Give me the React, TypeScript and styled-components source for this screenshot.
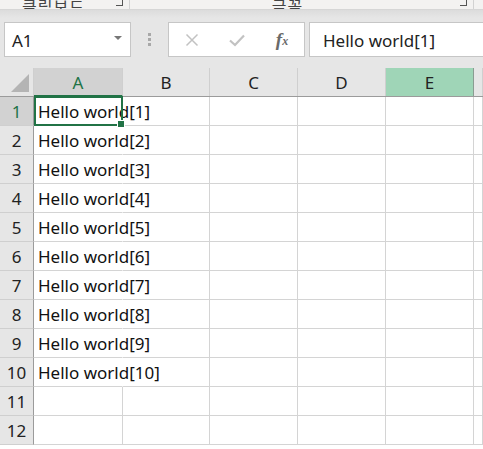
import React from 'react';
import styled, { createGlobalStyle } from 'styled-components';

const GlobalStyle = createGlobalStyle`
  html, body {
    margin: 0;
    padding: 0;
    background: #ffffff;
  }
  body {
    font-family: "Noto Sans", "Noto Sans CJK KR", sans-serif;
    overflow: hidden;
  }
`;

const columns = ['A', 'B', 'C', 'D', 'E'];
const colWidths = [89, 87, 88, 88, 88];
const rows = Array.from({ length: 12 }, (_, i) => i + 1);

export default function App() {
  return (
    <Page>
      <GlobalStyle />
      <Ribbon>
        <RibbonGroup $width={130}>
          <RibbonLabel $shift={-22}>클립보드</RibbonLabel>
          <Launcher />
        </RibbonGroup>
        <RibbonGroup $width={344}>
          <RibbonLabel $shift={-28}>글꼴</RibbonLabel>
          <Launcher />
        </RibbonGroup>
      </Ribbon>
      <FormulaArea>
        <NameBox>
          <span>A1</span>
          <Caret />
        </NameBox>
        <Grip>
          <i />
          <i />
          <i />
        </Grip>
        <FxButtons>
          <FxButton>
            <svg width="14" height="14" viewBox="0 0 14 14">
              <path d="M1.5 1.5 L12.5 12.5 M12.5 1.5 L1.5 12.5" stroke="#c2c2c2" strokeWidth="1.5" fill="none" />
            </svg>
          </FxButton>
          <FxButton>
            <svg width="18" height="16" viewBox="0 0 18 16">
              <path d="M2 8.5 L7 13 L16 3.5" stroke="#c2c2c2" strokeWidth="2.2" fill="none" />
            </svg>
          </FxButton>
          <FxButton $fx>
            f<sub>x</sub>
          </FxButton>
        </FxButtons>
        <FormulaInput>Hello world[1]</FormulaInput>
      </FormulaArea>
      <Sheet>
        <HeaderRow>
          <Corner>
            <svg width="20" height="20" viewBox="0 0 20 20">
              <path d="M19 1 L19 19 L1 19 Z" fill="#b4b4b4" />
            </svg>
          </Corner>
          {columns.map((c, i) => (
            <ColHeader key={c} $w={colWidths[i]} $active={c === 'A'} $green={c === 'E'}>
              {c}
            </ColHeader>
          ))}
          <ColHeader $w={0} $grow />
        </HeaderRow>
        {rows.map((r) => (
          <Row key={r}>
            <RowHeader $active={r === 1}>{r}</RowHeader>
            {columns.map((c, i) => (
              <Cell key={c} $w={colWidths[i]} $noRight={c === 'A' && r <= 10}>
                {c === 'A' && r <= 10 && <CellText>Hello world[{r}]</CellText>}
                {c === 'A' && r === 1 && (
                  <Selection>
                    <Handle />
                  </Selection>
                )}
              </Cell>
            ))}
            <Cell $w={0} $grow />
          </Row>
        ))}
      </Sheet>
    </Page>
  );
}

const Page = styled.div`
  width: 483px;
  height: 449px;
  overflow: hidden;
  display: flex;
  flex-direction: column;
`;

const Ribbon = styled.div`
  height: 9px;
  display: flex;
  background: #f3f2f1;
  border-bottom: 1px solid #d6d6d6;
  overflow: hidden;
`;

const RibbonGroup = styled.div<{ $width: number }>`
  width: ${(p) => p.$width}px;
  flex: none;
  display: flex;
  align-items: flex-end;
  justify-content: center;
  position: relative;
  border-right: 1px solid #d2d2d2;
  box-sizing: border-box;
  height: 9px;
`;

const RibbonLabel = styled.span<{ $shift: number }>`
  font-size: 16px;
  line-height: 16px;
  color: #444;
  margin-bottom: -6px;
  margin-left: ${(p) => p.$shift}px;
  letter-spacing: 1px;
`;

const Launcher = styled.span`
  position: absolute;
  right: 6px;
  bottom: 3px;
  width: 6px;
  height: 5px;
  border-right: 1px solid #555;
  border-bottom: 1px solid #555;
`;

const FormulaArea = styled.div`
  height: 58px;
  box-sizing: border-box;
  padding: 12px 0 11px 4px;
  display: flex;
  align-items: stretch;
  background: linear-gradient(#dcdcdc, #e6e6e6 8px, #e6e6e6);
`;

const NameBox = styled.div`
  width: 127px;
  box-sizing: border-box;
  background: #fff;
  border: 1px solid #c6c6c6;
  display: flex;
  align-items: center;
  justify-content: space-between;
  padding: 2px 8px 0 7px;
  font-size: 17px;
  color: #222;
`;

const Caret = styled.span`
  width: 0;
  height: 0;
  border-left: 4px solid transparent;
  border-right: 4px solid transparent;
  border-top: 4px solid #777;
  margin-top: -6px;
`;

const Grip = styled.div`
  width: 37px;
  display: flex;
  flex-direction: column;
  align-items: center;
  justify-content: center;
  gap: 2px;
  i {
    width: 3px;
    height: 3px;
    background: #a8a8a8;
  }
`;

const FxButtons = styled.div`
  width: 137px;
  box-sizing: border-box;
  background: #fff;
  border: 1px solid #c6c6c6;
  display: flex;
  align-items: center;
  padding-left: 14px;
  gap: 27px;
`;

const FxButton = styled.div<{ $fx?: boolean }>`
  width: 18px;
  display: flex;
  justify-content: center;
  align-items: center;
  font-family: "Liberation Serif", "DejaVu Serif", serif;
  font-style: italic;
  font-weight: bold;
  font-size: 19px;
  color: #6a6a6a;
  sub {
    font-size: 12px;
    vertical-align: baseline;
    position: relative;
    top: 2px;
  }
`;

const FormulaInput = styled.div`
  flex: 1;
  margin-left: 4px;
  background: #fff;
  border: 1px solid #c6c6c6;
  border-right: none;
  display: flex;
  align-items: center;
  padding: 1px 0 0 13px;
  font-size: 17px;
  color: #222;
`;

const Sheet = styled.div`
  display: flex;
  flex-direction: column;
  flex: 1;
  background: #fff;
`;

const HeaderRow = styled.div`
  height: 29px;
  display: flex;
  background: #e6e6e6;
  border-bottom: 1px solid #9b9b9b;
  box-sizing: border-box;
`;

const Corner = styled.div`
  width: 34px;
  flex: none;
  display: flex;
  align-items: flex-end;
  justify-content: flex-end;
  box-sizing: border-box;
  border-right: 1px solid #cfcfcf;
  padding: 0 3px 3px 0;
`;

const ColHeader = styled.div<{ $w: number; $active?: boolean; $green?: boolean; $grow?: boolean }>`
  width: ${(p) => p.$w}px;
  flex: ${(p) => (p.$grow ? 1 : 'none')};
  box-sizing: border-box;
  display: flex;
  align-items: center;
  justify-content: center;
  font-size: 17px;
  padding-top: 1px;
  color: ${(p) => (p.$active ? '#217346' : '#222')};
  background: ${(p) => (p.$green ? '#9fd5b7' : p.$active ? '#d2d2d2' : 'transparent')};
  border-right: 1px solid ${(p) => (p.$green ? '#8a9c92' : '#cfcfcf')};
  ${(p) => p.$active && 'border-bottom: 2px solid #217346; margin-bottom: -1px;'}
`;

const Row = styled.div`
  height: 29px;
  display: flex;
  flex: none;
`;

const RowHeader = styled.div<{ $active?: boolean }>`
  width: 34px;
  flex: none;
  box-sizing: border-box;
  display: flex;
  align-items: center;
  justify-content: center;
  font-size: 17px;
  padding-top: 1px;
  color: ${(p) => (p.$active ? '#217346' : '#222')};
  background: ${(p) => (p.$active ? '#d2d2d2' : '#e6e6e6')};
  border-right: 1px solid #9b9b9b;
  border-bottom: 1px solid #cfcfcf;
`;

const Cell = styled.div<{ $w: number; $noRight?: boolean; $grow?: boolean }>`
  width: ${(p) => p.$w}px;
  flex: ${(p) => (p.$grow ? 1 : 'none')};
  box-sizing: border-box;
  position: relative;
  border-bottom: 1px solid #d4d4d4;
  border-right: 1px solid ${(p) => (p.$noRight ? 'transparent' : '#d4d4d4')};
  display: flex;
  align-items: center;
`;

const CellText = styled.span`
  position: absolute;
  left: 4px;
  top: 1px;
  white-space: nowrap;
  font-size: 17px;
  line-height: 28px;
  color: #111;
  z-index: 1;
`;

const Selection = styled.div`
  position: absolute;
  left: 0;
  top: -1px;
  right: -1px;
  bottom: -1px;
  border: 2px solid #217346;
  z-index: 2;
`;

const Handle = styled.span`
  position: absolute;
  right: -4px;
  bottom: -4px;
  width: 6px;
  height: 6px;
  background: #217346;
  border: 1px solid #fff;
`;
